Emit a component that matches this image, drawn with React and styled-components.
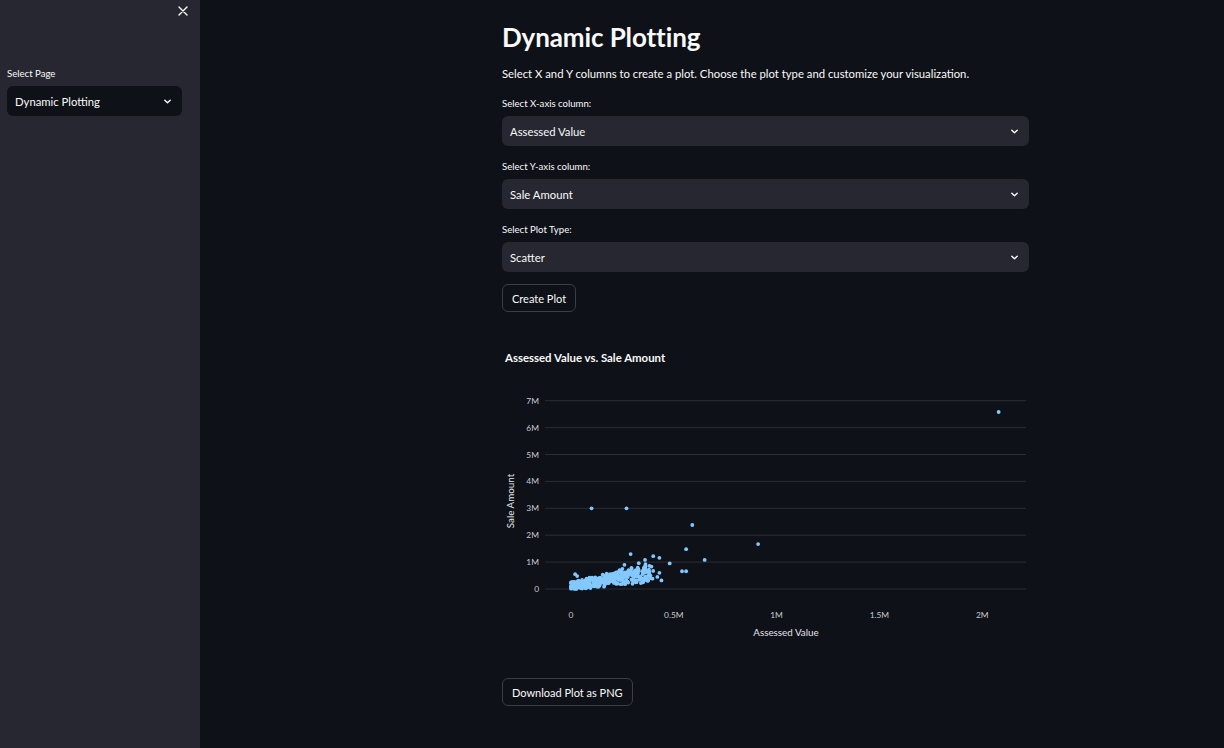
import React from "react";
import styled, { createGlobalStyle } from "styled-components";

const Global = createGlobalStyle`
  html, body { margin: 0; padding: 0; background: #0e1117; }
  body { font-family: "Lato", "Noto Sans", sans-serif; color: #fafafa; }
  * { box-sizing: border-box; }
`;

const Page = styled.div`
  display: flex;
  width: 1224px;
  height: 748px;
  overflow: hidden;
  background: #0e1117;
`;

const Sidebar = styled.aside`
  width: 200px;
  flex: none;
  background: #262730;
  padding: 0 18px 0 7px;
  display: flex;
  flex-direction: column;
`;

const CloseRow = styled.div`
  display: flex;
  justify-content: flex-end;
  height: 68px;
  padding-top: 6px;
  margin-right: -6px;
`;

const Main = styled.main`
  flex: 1;
  padding: 21px 195px 0 302px;
  display: flex;
  flex-direction: column;
`;

const Title = styled.h1`
  margin: 0;
  font-size: 26px;
  font-weight: 700;
  line-height: 32px;
  letter-spacing: -0.1px;
`;

const Lead = styled.p`
  margin: 13px 0 0;
  font-size: 11.3px;
  line-height: 16px;
`;

const Field = styled.div`
  display: flex;
  flex-direction: column;
  margin-top: ${(p) => p.$mt || 0}px;
`;

const Label = styled.label`
  font-size: 9.6px;
  line-height: 12px;
  margin-bottom: 6px;
  color: #fafafa;
`;

const Select = styled.div`
  height: 30px;
  border-radius: 6px;
  background: ${(p) => (p.$dark ? "#0e1117" : "#262730")};
  display: flex;
  align-items: center;
  justify-content: space-between;
  padding: 0 10px 0 8px;
  font-size: 11.3px;
  color: #fafafa;
`;

const Button = styled.button`
  align-self: flex-start;
  height: 28px;
  padding: 0 9px;
  border-radius: 6px;
  border: 1px solid #3b3d47;
  background: #0e1117;
  color: #fafafa;
  font-family: inherit;
  font-size: 11px;
  margin-top: ${(p) => p.$mt || 0}px;
`;

const ChartTitle = styled.div`
  margin: 39px 0 0 3px;
  font-size: 11.4px;
  font-weight: 700;
  line-height: 14px;
`;

const ChartSvg = styled.svg`
  display: block;
  margin-top: 21px;
`;

const Chevron = () => (
  <svg width="9" height="9" viewBox="0 0 10 10">
    <path d="M2 3.6 L5 6.4 L8 3.6" fill="none" stroke="#fafafa" strokeWidth="1.6" strokeLinecap="round" strokeLinejoin="round" />
  </svg>
);

const CloseIcon = () => (
  <svg width="10" height="10" viewBox="0 0 10 10">
    <path d="M1 1 L9 9 M9 1 L1 9" stroke="#fafafa" strokeWidth="1.4" strokeLinecap="round" />
  </svg>
);

function mulberry32(a) {
  return function () {
    a |= 0;
    a = (a + 0x6d2b79f5) | 0;
    let t = Math.imul(a ^ (a >>> 15), 1 | a);
    t = (t + Math.imul(t ^ (t >>> 7), 61 | t)) ^ t;
    return ((t ^ (t >>> 14)) >>> 0) / 4294967296;
  };
}

const points = (() => {
  const r = mulberry32(11);
  const pts = [];
  for (let i = 0; i < 340; i++) {
    const x = Math.pow(r(), 1.4) * 0.4;
    let y = x * (0.6 + r() * 1.6) + (r() - 0.5) * 0.32 + 0.1;
    if (y < 0) y = 0.01 + r() * 0.08;
    pts.push([x, y]);
  }
  const extra = [
    [2.08, 6.58], [0.1, 3.0], [0.27, 3.0], [0.59, 2.38], [0.91, 1.67],
    [0.56, 1.48], [0.65, 1.08], [0.29, 1.3], [0.4, 1.22], [0.43, 1.16],
    [0.36, 1.08], [0.48, 0.95], [0.54, 0.66], [0.56, 0.66], [0.02, 0.55],
    [0.03, 0.48], [0.09, 0.42], [0.44, 0.32], [0.43, 0.6], [0.38, 0.65],
    [0.35, 0.25], [0.34, 0.22], [0.26, 0.9], [0.31, 0.58], [0.42, 0.45],
    [0.25, 0.75], [0.22, 0.6], [0.19, 0.55], [0.28, 0.7],
  ];
  return pts.concat(extra);
})();

const X0 = 69;
const XS = 205.6;
const Y0 = 203;
const YS = 26.9;
const px = (v) => X0 + v * XS;
const py = (v) => Y0 - v * YS;

const Chart = () => {
  const yTicks = [0, 1, 2, 3, 4, 5, 6, 7];
  const xTicks = [
    [0, "0"], [0.5, "0.5M"], [1, "1M"], [1.5, "1.5M"], [2, "2M"],
  ];
  return (
    <ChartSvg width="527" height="260" viewBox="0 0 527 260">
      {yTicks.map((t) => (
        <g key={t}>
          <line x1="43" x2="524" y1={py(t)} y2={py(t)} stroke="#2b2d36" strokeWidth="1" />
          <text x="37" y={py(t) + 3} textAnchor="end" fontSize="8.4" fill="#c9cbd2" fontFamily="Lato, sans-serif">
            {t === 0 ? "0" : `${t}M`}
          </text>
        </g>
      ))}
      {xTicks.map(([v, l]) => (
        <text key={l} x={px(v)} y="232" textAnchor="middle" fontSize="8.4" fill="#c9cbd2" fontFamily="Lato, sans-serif">
          {l}
        </text>
      ))}
      <text x="284" y="250" textAnchor="middle" fontSize="9.8" fill="#e3e4e8" fontFamily="Lato, sans-serif">
        Assessed Value
      </text>
      <text
        x="0"
        y="0"
        transform="translate(12 115) rotate(-90)"
        textAnchor="middle"
        fontSize="9.8"
        fill="#e3e4e8"
        fontFamily="Lato, sans-serif"
      >
        Sale Amount
      </text>
      {points.map(([x, y], i) => (
        <circle key={i} cx={px(x)} cy={py(y)} r="1.9" fill="#83c9ff" />
      ))}
    </ChartSvg>
  );
};

export default function App() {
  return (
    <Page>
      <Global />
      <Sidebar>
        <CloseRow>
          <CloseIcon />
        </CloseRow>
        <Field>
          <Label>Select Page</Label>
          <Select $dark>
            <span>Dynamic Plotting</span>
            <Chevron />
          </Select>
        </Field>
      </Sidebar>
      <Main>
        <Title>Dynamic Plotting</Title>
        <Lead>Select X and Y columns to create a plot. Choose the plot type and customize your visualization.</Lead>
        <Field $mt={16}>
          <Label>Select X-axis column:</Label>
          <Select>
            <span>Assessed Value</span>
            <Chevron />
          </Select>
        </Field>
        <Field $mt={15}>
          <Label>Select Y-axis column:</Label>
          <Select>
            <span>Sale Amount</span>
            <Chevron />
          </Select>
        </Field>
        <Field $mt={15}>
          <Label>Select Plot Type:</Label>
          <Select>
            <span>Scatter</span>
            <Chevron />
          </Select>
        </Field>
        <Button $mt={12}>Create Plot</Button>
        <ChartTitle>Assessed Value vs. Sale Amount</ChartTitle>
        <Chart />
        <Button $mt={32}>Download Plot as PNG</Button>
      </Main>
    </Page>
  );
}
